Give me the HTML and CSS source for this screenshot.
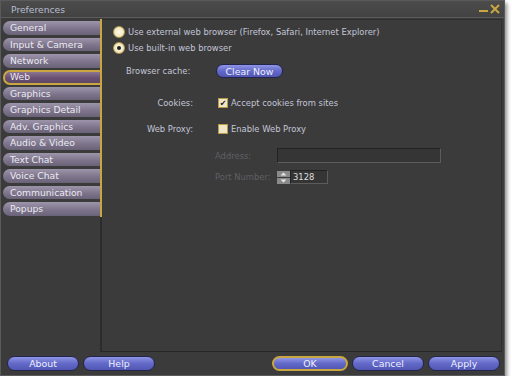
FILE: index.html
```html
<!DOCTYPE html>
<html lang="en">
<head>
    <meta charset="UTF-8">
    <title>Preferences</title>
    <link rel="stylesheet" href="styles.css">
</head>
<body>

<div class="window">
    <div class="titlebar">
        <span class="title">Preferences</span>
        <span class="controls">
            <svg width="22" height="10" viewBox="0 0 22 10">
                <rect x="1" y="6" width="9" height="2" fill="#c9a640"/>
                <path d="M13 1 L21 9 M21 1 L13 9" stroke="#c9a640" stroke-width="2"/>
            </svg>
        </span>
    </div>

    <div class="main">
        <div class="tabs">
            <div class="tab">General</div>
            <div class="tab">Input &amp; Camera</div>
            <div class="tab">Network</div>
            <div class="tab active">Web</div>
            <div class="tab">Graphics</div>
            <div class="tab">Graphics Detail</div>
            <div class="tab">Adv. Graphics</div>
            <div class="tab">Audio &amp; Video</div>
            <div class="tab">Text Chat</div>
            <div class="tab">Voice Chat</div>
            <div class="tab">Communication</div>
            <div class="tab">Popups</div>
        </div>

        <div class="panel">
            <div class="radios">
                <label class="radio"><span class="dot"></span>Use external web browser (Firefox, Safari, Internet Explorer)</label>
                <label class="radio"><span class="dot on"></span>Use built-in web browser</label>
            </div>

            <div class="cache-row">
                <span class="cache-label">Browser cache:</span>
                <span class="btn small">Clear Now</span>
            </div>

            <div class="form">
                <div class="row">
                    <span class="label">Cookies:</span>
                    <label class="check"><span class="box on">&#10004;</span>Accept cookies from sites</label>
                </div>
                <div class="row">
                    <span class="label">Web Proxy:</span>
                    <label class="check"><span class="box"></span>Enable Web Proxy</label>
                </div>
                <div class="row sub addr">
                    <span class="label dim">Address:</span>
                    <span class="field wide"></span>
                </div>
                <div class="row sub port-row">
                    <span class="label dim">Port Number:</span>
                    <span class="spin">
                        <svg width="13" height="13" viewBox="0 0 13 13">
                            <rect x="0" y="0" width="13" height="6" fill="#8a8a8a"/>
                            <rect x="0" y="7" width="13" height="6" fill="#8a8a8a"/>
                            <path d="M3.5 4.5 L6.5 1.5 L9.5 4.5 Z" fill="#e6e6e6"/>
                            <path d="M3.5 8.5 L6.5 11.5 L9.5 8.5 Z" fill="#e6e6e6"/>
                        </svg>
                    </span>
                    <span class="field port">3128</span>
                </div>
            </div>
        </div>
    </div>

    <div class="footer">
        <div class="group">
            <span class="btn">About</span>
            <span class="btn">Help</span>
        </div>
        <div class="group">
            <span class="btn default">OK</span>
            <span class="btn">Cancel</span>
            <span class="btn">Apply</span>
        </div>
    </div>
</div>

</body>
</html>
```

FILE: styles.css
```css
body {
    margin: 0;
    background: #fff;
    font-family: 'DejaVu Sans', sans-serif;
    font-size: 8.4px;
    color: #c4c6d8;
}
.window {
    width: 505px;
    height: 376px;
    box-sizing: border-box;
    background: #3b3b3b;
    border: 1px solid #5a5a5a;
    box-shadow: 2px 3px 4px rgba(0, 0, 0, 0.45);
    display: flex;
    flex-direction: column;
}
.titlebar {
    height: 16px;
    display: flex;
    align-items: center;
    justify-content: space-between;
    padding: 0 4px 0 10px;
    background: linear-gradient(#4c4c4c, #424242);
    border-bottom: 1px solid #5c5c5c;
}
.title {
    font-size: 9.2px;
    color: #b8bccf;
}
.controls svg {
    display: block;
}
.main {
    flex: 1;
    display: flex;
    padding-top: 1px;
}
.tabs {
    width: 97px;
    padding: 2px 0 0 2px;
    display: flex;
    flex-direction: column;
    gap: 3px;
}
.tab {
    height: 13.5px;
    line-height: 13px;
    padding-left: 7px;
    border-radius: 7px 0 0 7px;
    background: linear-gradient(#9d95aa, #7e758c 55%, #6a6277);
    color: #eceaf2;
    font-size: 9.2px;
    box-sizing: border-box;
}
.tab.active {
    background: linear-gradient(#8a7592, #6a5072 55%, #5e4766);
    border: 2px solid #c9a640;
    border-right: none;
    line-height: 10px;
    padding-left: 5px;
    margin-right: -2px;
    height: 15px;
    margin-top: -1px;
    margin-bottom: -1px;
}
.panel {
    flex: 1;
    margin-right: 2px;
    border: 1px solid #2e2e2e;
    border-left: 2px solid #2c2c2c;
    border-bottom-color: #262626;
    position: relative;
    padding: 6px 0 0 11px;
}
.panel::before {
    content: "";
    position: absolute;
    left: -2px;
    top: -1px;
    width: 2px;
    height: 198px;
    background: #c9a640;
}
.radios {
    display: flex;
    flex-direction: column;
    gap: 4px;
}
.radio {
    display: flex;
    align-items: center;
    gap: 3px;
    height: 12px;
}
.dot {
    width: 10px;
    height: 10px;
    border-radius: 50%;
    background: radial-gradient(#fffbe6, #e8dcb0);
    border: 1px solid #b89a48;
    position: relative;
}
.dot.on::after {
    content: "";
    position: absolute;
    left: 3px;
    top: 3px;
    width: 4px;
    height: 4px;
    border-radius: 50%;
    background: #222;
}
.cache-row {
    display: flex;
    align-items: center;
    margin-top: 10px;
    padding-left: 13px;
}
.cache-label {
    width: 90px;
}
.btn {
    display: inline-flex;
    align-items: center;
    justify-content: center;
    height: 14px;
    border-radius: 8px;
    border: 1px solid #23254a;
    background: linear-gradient(#8f95e6, #6369c8 50%, #5157b3);
    color: #eef0ff;
    font-size: 9.4px;
    box-sizing: border-box;
}
.btn.small {
    width: 67px;
}
.form {
    margin-top: 19px;
    display: flex;
    flex-direction: column;
    gap: 14px;
}
.row {
    display: flex;
    align-items: center;
    height: 12px;
}
.label {
    width: 80px;
    text-align: right;
    margin-right: 25px;
}
.row.sub .label {
    width: auto;
    margin-left: 102px;
    margin-right: 0;
    text-align: left;
    min-width: 62px;
}
.dim {
    color: #5f5f64;
}
.check {
    display: flex;
    align-items: center;
    gap: 3px;
}
.box {
    width: 10px;
    height: 10px;
    box-sizing: border-box;
    border: 1px solid #b89a48;
    background: #eee6c8;
    color: #1a1a1a;
    font-size: 8px;
    font-weight: bold;
    line-height: 9px;
    text-align: center;
}
.field {
    height: 15px;
    box-sizing: border-box;
    border: 1px solid #5c5c5c;
    border-top-color: #222;
    border-left-color: #222;
    background: #353535;
}
.field.wide {
    width: 164px;
}
.row.addr {
    height: 15px;
    margin-top: -1px;
}
.row.port-row {
    margin-top: -7px;
    height: 14px;
}
.spin svg {
    display: block;
}
.field.port {
    width: 38px;
    height: 14px;
    line-height: 12px;
    padding-left: 2px;
    color: #dedede;
}
.footer {
    height: 22px;
    display: flex;
    justify-content: space-between;
    align-items: center;
    padding: 0 4px 1px 6px;
}
.group {
    display: flex;
    gap: 4px;
}
.group .btn {
    width: 72px;
    height: 15px;
}
.btn.default {
    width: 76px;
    border: 2px solid #c9a640;
}
```
